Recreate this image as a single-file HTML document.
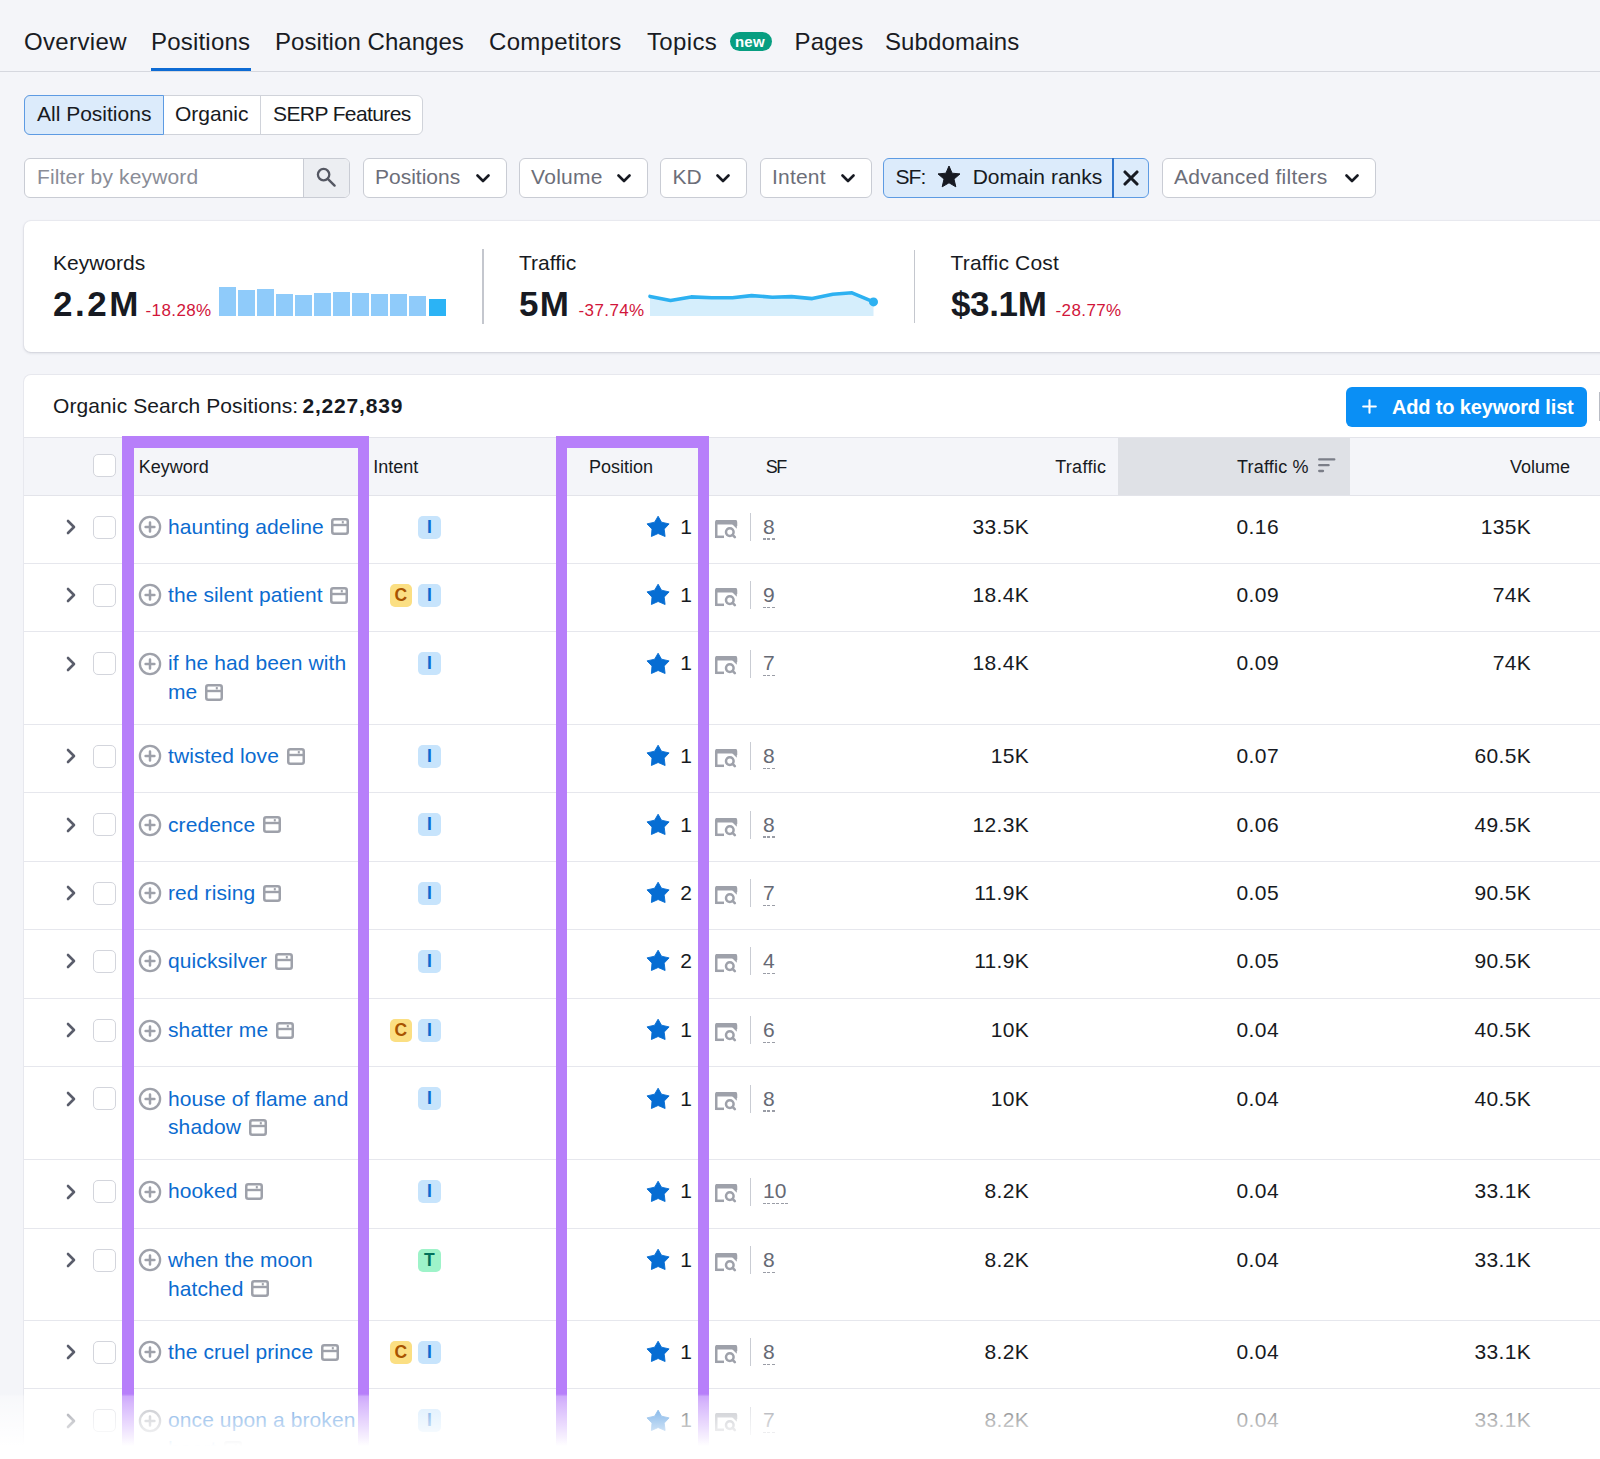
<!DOCTYPE html>
<html><head><meta charset="utf-8"><title>Positions</title>
<style>
html,body{margin:0;padding:0;}
body{width:1600px;height:1459px;overflow:hidden;position:relative;background:#f4f5f9;font-family:"Liberation Sans",sans-serif;}
.t{position:absolute;white-space:nowrap;}
.b{position:absolute;}
.b svg{display:block;}
</style></head><body>
<div class="t " style="left:24px;top:30.08px;font-size:24px;line-height:24px;color:#191b23;font-weight:400;letter-spacing:0.35px;">Overview</div>
<div class="t " style="left:151px;top:30.08px;font-size:24px;line-height:24px;color:#191b23;font-weight:400;letter-spacing:0.2px;">Positions</div>
<div class="t " style="left:275px;top:30.08px;font-size:24px;line-height:24px;color:#191b23;font-weight:400;letter-spacing:0.05px;">Position Changes</div>
<div class="t " style="left:489px;top:30.08px;font-size:24px;line-height:24px;color:#191b23;font-weight:400;letter-spacing:0.3px;">Competitors</div>
<div class="t " style="left:647px;top:30.08px;font-size:24px;line-height:24px;color:#191b23;font-weight:400;letter-spacing:0.35px;">Topics</div>
<div class="t " style="left:794.5px;top:30.08px;font-size:24px;line-height:24px;color:#191b23;font-weight:400;letter-spacing:0.2px;">Pages</div>
<div class="t " style="left:885px;top:30.08px;font-size:24px;line-height:24px;color:#191b23;font-weight:400;letter-spacing:0.1px;">Subdomains</div>
<div class="b" style="left:729.5px;top:32px;width:42px;height:19px;background:#079e81;border-radius:10px;"></div>
<div class="t " style="left:735px;top:33.90px;font-size:15px;line-height:15px;color:#fff;font-weight:700;letter-spacing:0.2px;">new</div>
<div class="b" style="left:0px;top:71px;width:1600px;height:1px;background:#d6d8df;"></div>
<div class="b" style="left:151px;top:68px;width:100px;height:3px;background:#0d6bd4;"></div>
<div class="b" style="left:24px;top:94.5px;width:398.5px;height:40px;background:#fff;border:1px solid #d0d3da;border-radius:6px;box-sizing:border-box;"></div>
<div class="b" style="left:24px;top:94.5px;width:140px;height:40px;background:#dcebfb;border:1px solid #5d9be3;border-radius:6px 0 0 6px;box-sizing:border-box;"></div>
<div class="b" style="left:260.3px;top:95.5px;width:1px;height:38px;background:#d0d3da;"></div>
<div class="t " style="left:37px;top:103.22px;font-size:21px;line-height:21px;color:#171a22;font-weight:400;">All Positions</div>
<div class="t " style="left:175px;top:103.22px;font-size:21px;line-height:21px;color:#171a22;font-weight:400;">Organic</div>
<div class="t " style="left:273px;top:103.22px;font-size:21px;line-height:21px;color:#171a22;font-weight:400;letter-spacing:-0.6px;">SERP Features</div>
<div class="b" style="left:24px;top:158px;width:326px;height:40px;background:#fff;border:1px solid #c9ccd4;border-radius:6px;box-sizing:border-box;overflow:hidden;"><div style="position:absolute;left:278px;top:0;width:48px;height:38px;background:#eceef2;border-left:1px solid #c9ccd4;"></div></div>
<div class="t " style="left:37px;top:166.32px;font-size:21px;line-height:21px;color:#8a8d97;font-weight:400;letter-spacing:0.15px;">Filter by keyword</div>
<div class="b" style="left:315px;top:167px;width:22px;height:22px;"><svg width="22" height="22" viewBox="0 0 22 22"><circle cx="8.6" cy="7.6" r="5.7" fill="none" stroke="#555863" stroke-width="2.3"/><path d="M12.8 11.8 L19.6 18.6" stroke="#555863" stroke-width="2.4" stroke-linecap="round"/></svg></div>
<div class="b" style="left:362.5px;top:158px;width:144.5px;height:40px;background:#fff;border:1px solid #c9ccd4;border-radius:6px;box-sizing:border-box;"></div>
<div class="t " style="left:375.0px;top:166.32px;font-size:21px;line-height:21px;color:#6c6e79;font-weight:400;">Positions</div>
<div class="b" style="left:476.0px;top:174px;width:14px;height:9px;"><svg width="14" height="9" viewBox="0 0 14 9"><path d="M1.5 1.5 L7 7 L12.5 1.5" fill="none" stroke="#171a22" stroke-width="2.6" stroke-linecap="round" stroke-linejoin="round"/></svg></div>
<div class="b" style="left:518.5px;top:158px;width:129px;height:40px;background:#fff;border:1px solid #c9ccd4;border-radius:6px;box-sizing:border-box;"></div>
<div class="t " style="left:531.0px;top:166.32px;font-size:21px;line-height:21px;color:#6c6e79;font-weight:400;letter-spacing:0.3px;">Volume</div>
<div class="b" style="left:616.5px;top:174px;width:14px;height:9px;"><svg width="14" height="9" viewBox="0 0 14 9"><path d="M1.5 1.5 L7 7 L12.5 1.5" fill="none" stroke="#171a22" stroke-width="2.6" stroke-linecap="round" stroke-linejoin="round"/></svg></div>
<div class="b" style="left:660px;top:158px;width:87px;height:40px;background:#fff;border:1px solid #c9ccd4;border-radius:6px;box-sizing:border-box;"></div>
<div class="t " style="left:672.5px;top:166.32px;font-size:21px;line-height:21px;color:#6c6e79;font-weight:400;">KD</div>
<div class="b" style="left:716px;top:174px;width:14px;height:9px;"><svg width="14" height="9" viewBox="0 0 14 9"><path d="M1.5 1.5 L7 7 L12.5 1.5" fill="none" stroke="#171a22" stroke-width="2.6" stroke-linecap="round" stroke-linejoin="round"/></svg></div>
<div class="b" style="left:759.5px;top:158px;width:112px;height:40px;background:#fff;border:1px solid #c9ccd4;border-radius:6px;box-sizing:border-box;"></div>
<div class="t " style="left:772.0px;top:166.32px;font-size:21px;line-height:21px;color:#6c6e79;font-weight:400;letter-spacing:0.2px;">Intent</div>
<div class="b" style="left:840.5px;top:174px;width:14px;height:9px;"><svg width="14" height="9" viewBox="0 0 14 9"><path d="M1.5 1.5 L7 7 L12.5 1.5" fill="none" stroke="#171a22" stroke-width="2.6" stroke-linecap="round" stroke-linejoin="round"/></svg></div>
<div class="b" style="left:883px;top:158px;width:266px;height:40px;background:#dcebfb;border:1px solid #5d9be3;border-radius:6px;box-sizing:border-box;"></div>
<div class="b" style="left:1112px;top:158px;width:2px;height:40px;background:#2f74cc;"></div>
<div class="t " style="left:895.5px;top:166.32px;font-size:21px;line-height:21px;color:#171a22;font-weight:400;letter-spacing:-0.9px;">SF:</div>
<div class="b" style="left:937px;top:165.2px;width:24px;height:23px;"><svg width="24" height="23" viewBox="0 0 24 23"><path d="M12 1 L15.1 8.2 L23 8.9 L17 14.1 L18.8 21.8 L12 17.8 L5.2 21.8 L7 14.1 L1 8.9 L8.9 8.2 Z" fill="#171a22" stroke="#171a22" stroke-width="1" stroke-linejoin="round"/></svg></div>
<div class="t " style="left:972.7px;top:166.32px;font-size:21px;line-height:21px;color:#171a22;font-weight:400;">Domain ranks</div>
<div class="b" style="left:1123px;top:170px;width:16px;height:16px;"><svg width="16" height="16" viewBox="0 0 16 16"><path d="M2 2 L14 14 M14 2 L2 14" stroke="#171a22" stroke-width="3.1" stroke-linecap="round"/></svg></div>
<div class="b" style="left:1161.5px;top:158px;width:214px;height:40px;background:#fff;border:1px solid #c9ccd4;border-radius:6px;box-sizing:border-box;"></div>
<div class="t " style="left:1174.0px;top:166.32px;font-size:21px;line-height:21px;color:#6c6e79;font-weight:400;letter-spacing:0.25px;">Advanced filters</div>
<div class="b" style="left:1344.5px;top:174px;width:14px;height:9px;"><svg width="14" height="9" viewBox="0 0 14 9"><path d="M1.5 1.5 L7 7 L12.5 1.5" fill="none" stroke="#171a22" stroke-width="2.6" stroke-linecap="round" stroke-linejoin="round"/></svg></div>
<div class="b" style="left:24px;top:221px;width:1600px;height:131px;background:#fff;border-radius:7px;box-shadow:0 1px 3px rgba(30,35,60,0.16), 0 0 0 1px rgba(30,35,60,0.03);"></div>
<div class="t " style="left:53px;top:252.22px;font-size:21px;line-height:21px;color:#171a22;font-weight:400;">Keywords</div>
<div class="t " style="left:53px;top:286.37px;font-size:35px;line-height:35px;color:#171a22;font-weight:700;letter-spacing:2.5px;">2.2M</div>
<div class="t " style="left:145.5px;top:301.61px;font-size:17px;line-height:17px;color:#d1153a;font-weight:400;letter-spacing:0.4px;">-18.28%</div>
<div class="b" style="left:218.75px;top:287.4px;width:17px;height:28.6px;background:#8fcbfa;"></div>
<div class="b" style="left:237.82px;top:289.7px;width:17px;height:26.3px;background:#8fcbfa;"></div>
<div class="b" style="left:256.89px;top:289.3px;width:17px;height:26.7px;background:#8fcbfa;"></div>
<div class="b" style="left:275.96px;top:294.2px;width:17px;height:21.8px;background:#8fcbfa;"></div>
<div class="b" style="left:295.03px;top:294.75px;width:17px;height:21.25px;background:#8fcbfa;"></div>
<div class="b" style="left:314.1px;top:293.1px;width:17px;height:22.9px;background:#8fcbfa;"></div>
<div class="b" style="left:333.17px;top:291.9px;width:17px;height:24.1px;background:#8fcbfa;"></div>
<div class="b" style="left:352.24px;top:293.4px;width:17px;height:22.6px;background:#8fcbfa;"></div>
<div class="b" style="left:371.31px;top:294px;width:17px;height:22px;background:#8fcbfa;"></div>
<div class="b" style="left:390.38px;top:294px;width:17px;height:22px;background:#8fcbfa;"></div>
<div class="b" style="left:409.45px;top:295.5px;width:17px;height:20.5px;background:#8fcbfa;"></div>
<div class="b" style="left:428.52px;top:299.4px;width:17px;height:16.6px;background:#2bb3f5;"></div>
<div class="b" style="left:481.8px;top:249px;width:1.8px;height:74.5px;background:#c4c7ce;"></div>
<div class="t " style="left:519px;top:252.22px;font-size:21px;line-height:21px;color:#171a22;font-weight:400;">Traffic</div>
<div class="t " style="left:519px;top:286.37px;font-size:35px;line-height:35px;color:#171a22;font-weight:700;letter-spacing:1.2px;">5M</div>
<div class="t " style="left:578.5px;top:301.61px;font-size:17px;line-height:17px;color:#d1153a;font-weight:400;letter-spacing:0.4px;">-37.74%</div>
<div class="b" style="left:640px;top:280px;width:250px;height:40px;"><svg width="250" height="40" viewBox="0 0 250 40"><path d="M10.0,36 L10.0,16.4 L30.5,20.5 L51.1,16.9 L71.8,17.8 L92.4,17.8 L111.6,15.6 L132.3,17.2 L151.5,16.6 L172.2,18.6 L192.8,14.2 L212.0,12.8 L233.5,21.9 L233.5,36 Z" fill="#d5eefc"/><polyline points="10.0,16.4 30.5,20.5 51.1,16.9 71.8,17.8 92.4,17.8 111.6,15.6 132.3,17.2 151.5,16.6 172.2,18.6 192.8,14.2 212.0,12.8 233.5,21.9" fill="none" stroke="#2db1f1" stroke-width="3.6" stroke-linejoin="round" stroke-linecap="round"/><circle cx="233.5" cy="21.899999999999977" r="4.5" fill="#2db1f1"/></svg></div>
<div class="b" style="left:913.6px;top:249.5px;width:1.8px;height:73.5px;background:#c4c7ce;"></div>
<div class="t " style="left:950.5px;top:252.22px;font-size:21px;line-height:21px;color:#171a22;font-weight:400;letter-spacing:0.2px;">Traffic Cost</div>
<div class="t " style="left:951px;top:286.37px;font-size:35px;line-height:35px;color:#171a22;font-weight:700;letter-spacing:-0.35px;">$3.1M</div>
<div class="t " style="left:1055.5px;top:301.61px;font-size:17px;line-height:17px;color:#d1153a;font-weight:400;letter-spacing:0.4px;">-28.77%</div>
<div class="b" style="left:24px;top:375px;width:1600px;height:1200px;background:#fff;border-radius:7px;box-shadow:0 0 0 1px rgba(30,35,60,0.06);"></div>
<div class="t " style="left:53px;top:394.92px;font-size:21px;line-height:21px;color:#171a22;font-weight:400;letter-spacing:0.1px;">Organic Search Positions:</div>
<div class="t " style="left:302.5px;top:394.92px;font-size:21px;line-height:21px;color:#171a22;font-weight:700;letter-spacing:0.8px;">2,227,839</div>
<div class="b" style="left:1346px;top:386.8px;width:241.3px;height:40px;background:#0a8ff5;border-radius:6px;"></div>
<div class="b" style="left:1362px;top:399px;width:15px;height:15px;"><svg width="15" height="15" viewBox="0 0 15 15"><path d="M7.5 1.2 V13.8 M1.2 7.5 H13.8" stroke="#fff" stroke-width="2.1" stroke-linecap="round"/></svg></div>
<div class="t " style="left:1392px;top:396.57px;font-size:20px;line-height:20px;color:#fff;font-weight:700;letter-spacing:-0.15px;">Add to keyword list</div>
<div class="b" style="left:1599px;top:391.5px;width:1px;height:29.5px;background:#b9bcc4;"></div>
<div class="b" style="left:24px;top:437px;width:1576px;height:59px;background:#f4f5f9;border-top:1px solid #e3e4ea;border-bottom:1px solid #e3e4ea;box-sizing:border-box;"></div>
<div class="b" style="left:1118px;top:437px;width:231.5px;height:59px;background:#dfe1e6;border-top:1px solid #e3e4ea;border-bottom:1px solid #e3e4ea;box-sizing:border-box;"></div>
<div class="t " style="left:138.75px;top:458.06px;font-size:18px;line-height:18px;color:#171a22;font-weight:400;">Keyword</div>
<div class="t " style="left:373.2px;top:458.06px;font-size:18px;line-height:18px;color:#171a22;font-weight:400;">Intent</div>
<div class="t " style="left:589px;top:458.06px;font-size:18px;line-height:18px;color:#171a22;font-weight:400;">Position</div>
<div class="t " style="left:765.7px;top:458.06px;font-size:18px;line-height:18px;color:#171a22;font-weight:400;letter-spacing:-1.5px;">SF</div>
<div class="t " style="right:493.70000000000005px;top:458.06px;font-size:18px;line-height:18px;color:#171a22;font-weight:400;letter-spacing:0.3px;">Traffic</div>
<div class="t " style="left:1237px;top:458.06px;font-size:18px;line-height:18px;color:#171a22;font-weight:400;letter-spacing:0.2px;">Traffic %</div>
<div class="b" style="left:1317.5px;top:457.5px;width:18px;height:15px;"><svg width="18" height="15" viewBox="0 0 18 15"><path d="M1.2 1.4 H16.3 M1.2 7.2 H10.6 M1.2 13 H5" stroke="#7b7e88" stroke-width="2.3" stroke-linecap="round"/></svg></div>
<div class="t " style="right:30px;top:458.06px;font-size:18px;line-height:18px;color:#171a22;font-weight:400;">Volume</div>
<div class="b" style="left:92.5px;top:453.75px;width:23px;height:23px;background:#fff;border:1.8px solid #d3d5dc;border-radius:5px;box-sizing:border-box;"></div>
<div class="b" style="left:24px;top:562.7px;width:1576px;height:1px;background:#e6e7ed;"></div>
<div class="b" style="left:65.5px;top:519.00px;width:10px;height:16px;"><svg width="10" height="16" viewBox="0 0 10 16"><path d="M2 2 L8 8 L2 14" fill="none" stroke="#5a5d6b" stroke-width="2.6" stroke-linecap="round" stroke-linejoin="round"/></svg></div>
<div class="b" style="left:92.8px;top:515.7px;width:23px;height:23px;background:#fff;border:1.8px solid #d3d5dc;border-radius:5px;box-sizing:border-box;"></div>
<div class="b" style="left:137.75px;top:515.10px;width:24px;height:24px;"><svg width="24" height="24" viewBox="0 0 24 24"><circle cx="12" cy="12" r="10.1" fill="none" stroke="#9ea1aa" stroke-width="2.3"/><path d="M12 7.6 V16.4 M7.6 12 H16.4" stroke="#9ea1aa" stroke-width="2.5" stroke-linecap="round"/></svg></div>
<div class="t " style="left:168px;top:515.97px;font-size:21px;line-height:21px;color:#0b6bd0;font-weight:400;letter-spacing:0.1px;">haunting adeline<span style="display:inline-block;width:18px;height:17px;margin-left:7.6px;vertical-align:-1.4px;"><svg width="18" height="17" viewBox="0 0 18 17"><rect x="1.25" y="1.25" width="15.5" height="14.5" rx="2" fill="none" stroke="#9ea1aa" stroke-width="2.5"/><path d="M1.5 7 H16.5" stroke="#9ea1aa" stroke-width="2.4"/><rect x="10.8" y="3.1" width="2" height="2.3" fill="#9ea1aa"/></svg></span></div>
<div class="b" style="left:418.2px;top:515.5px;width:22.5px;height:23px;background:#c7e4fc;border-radius:5px;color:#0b6bd0;font-size:17.5px;line-height:23px;font-weight:700;text-align:center;">I</div>
<div class="b" style="left:646px;top:515.00px;width:24px;height:23px;"><svg width="24" height="23" viewBox="0 0 24 23"><path d="M12.1 1.2 L15.5 7.2 L23.1 8.9 L18.2 14.1 L19.1 21.5 L12.1 18.5 L5.4 21.5 L6 14.1 L1 8.9 L8.6 7.2 Z" fill="#066dd3" stroke="#066dd3" stroke-width="0.9" stroke-linejoin="round"/></svg></div>
<div class="t " style="right:908.2px;top:515.97px;font-size:21px;line-height:21px;color:#171a22;font-weight:400;">1</div>
<div class="b" style="left:714.5px;top:519.80px;width:23px;height:19px;"><svg width="23" height="19" viewBox="0 0 23 19"><path d="M1.25 18 V2.5 Q1.25 0.8 3 0.8 H19.5 Q21 0.8 21 2.5 V6" fill="none" stroke="#9ea1aa" stroke-width="2.5"/><path d="M0.8 2.5 H21.2" stroke="#9ea1aa" stroke-width="4"/><polygon points="17,4 21.8,4 21.8,8.8" fill="#9ea1aa"/><path d="M1.25 16.8 H9" stroke="#9ea1aa" stroke-width="2.5"/><circle cx="14.8" cy="12.1" r="3.8" fill="none" stroke="#9ea1aa" stroke-width="2.5"/><path d="M17.6 14.9 L19.8 17.1" stroke="#9ea1aa" stroke-width="2.6" stroke-linecap="round"/></svg></div>
<div class="b" style="left:749.5px;top:513px;width:1.8px;height:28px;background:#c9ccd3;"></div>
<div class="t " style="left:763px;top:515.97px;font-size:21px;line-height:21px;color:#666974;font-weight:400;">8</div>
<div class="b" style="left:763px;top:538.35px;width:12.2px;height:1.6px;background:repeating-linear-gradient(to right,#9a9da6 0 2.7px,transparent 2.7px 4.5px);"></div>
<div class="t " style="right:571px;top:515.97px;font-size:21px;line-height:21px;color:#171a22;font-weight:400;letter-spacing:0.3px;">33.5K</div>
<div class="t " style="left:1236.5px;top:515.97px;font-size:21px;line-height:21px;color:#171a22;font-weight:400;letter-spacing:0.4px;">0.16</div>
<div class="t " style="right:69px;top:515.97px;font-size:21px;line-height:21px;color:#171a22;font-weight:400;letter-spacing:0.3px;">135K</div>
<div class="b" style="left:24px;top:631.0px;width:1576px;height:1px;background:#e6e7ed;"></div>
<div class="b" style="left:65.5px;top:587.20px;width:10px;height:16px;"><svg width="10" height="16" viewBox="0 0 10 16"><path d="M2 2 L8 8 L2 14" fill="none" stroke="#5a5d6b" stroke-width="2.6" stroke-linecap="round" stroke-linejoin="round"/></svg></div>
<div class="b" style="left:92.8px;top:583.9px;width:23px;height:23px;background:#fff;border:1.8px solid #d3d5dc;border-radius:5px;box-sizing:border-box;"></div>
<div class="b" style="left:137.75px;top:583.30px;width:24px;height:24px;"><svg width="24" height="24" viewBox="0 0 24 24"><circle cx="12" cy="12" r="10.1" fill="none" stroke="#9ea1aa" stroke-width="2.3"/><path d="M12 7.6 V16.4 M7.6 12 H16.4" stroke="#9ea1aa" stroke-width="2.5" stroke-linecap="round"/></svg></div>
<div class="t " style="left:168px;top:584.17px;font-size:21px;line-height:21px;color:#0b6bd0;font-weight:400;letter-spacing:0.1px;">the silent patient<span style="display:inline-block;width:18px;height:17px;margin-left:7.6px;vertical-align:-1.4px;"><svg width="18" height="17" viewBox="0 0 18 17"><rect x="1.25" y="1.25" width="15.5" height="14.5" rx="2" fill="none" stroke="#9ea1aa" stroke-width="2.5"/><path d="M1.5 7 H16.5" stroke="#9ea1aa" stroke-width="2.4"/><rect x="10.8" y="3.1" width="2" height="2.3" fill="#9ea1aa"/></svg></span></div>
<div class="b" style="left:389.7px;top:583.7px;width:22.5px;height:23px;background:#fbdf83;border-radius:5px;color:#a85300;font-size:17.5px;line-height:23px;font-weight:700;text-align:center;">C</div>
<div class="b" style="left:418.2px;top:583.7px;width:22.5px;height:23px;background:#c7e4fc;border-radius:5px;color:#0b6bd0;font-size:17.5px;line-height:23px;font-weight:700;text-align:center;">I</div>
<div class="b" style="left:646px;top:583.20px;width:24px;height:23px;"><svg width="24" height="23" viewBox="0 0 24 23"><path d="M12.1 1.2 L15.5 7.2 L23.1 8.9 L18.2 14.1 L19.1 21.5 L12.1 18.5 L5.4 21.5 L6 14.1 L1 8.9 L8.6 7.2 Z" fill="#066dd3" stroke="#066dd3" stroke-width="0.9" stroke-linejoin="round"/></svg></div>
<div class="t " style="right:908.2px;top:584.17px;font-size:21px;line-height:21px;color:#171a22;font-weight:400;">1</div>
<div class="b" style="left:714.5px;top:588.00px;width:23px;height:19px;"><svg width="23" height="19" viewBox="0 0 23 19"><path d="M1.25 18 V2.5 Q1.25 0.8 3 0.8 H19.5 Q21 0.8 21 2.5 V6" fill="none" stroke="#9ea1aa" stroke-width="2.5"/><path d="M0.8 2.5 H21.2" stroke="#9ea1aa" stroke-width="4"/><polygon points="17,4 21.8,4 21.8,8.8" fill="#9ea1aa"/><path d="M1.25 16.8 H9" stroke="#9ea1aa" stroke-width="2.5"/><circle cx="14.8" cy="12.1" r="3.8" fill="none" stroke="#9ea1aa" stroke-width="2.5"/><path d="M17.6 14.9 L19.8 17.1" stroke="#9ea1aa" stroke-width="2.6" stroke-linecap="round"/></svg></div>
<div class="b" style="left:749.5px;top:581.2px;width:1.8px;height:28px;background:#c9ccd3;"></div>
<div class="t " style="left:763px;top:584.17px;font-size:21px;line-height:21px;color:#666974;font-weight:400;">9</div>
<div class="b" style="left:763px;top:606.55px;width:12.2px;height:1.6px;background:repeating-linear-gradient(to right,#9a9da6 0 2.7px,transparent 2.7px 4.5px);"></div>
<div class="t " style="right:571px;top:584.17px;font-size:21px;line-height:21px;color:#171a22;font-weight:400;letter-spacing:0.3px;">18.4K</div>
<div class="t " style="left:1236.5px;top:584.17px;font-size:21px;line-height:21px;color:#171a22;font-weight:400;letter-spacing:0.4px;">0.09</div>
<div class="t " style="right:69px;top:584.17px;font-size:21px;line-height:21px;color:#171a22;font-weight:400;letter-spacing:0.3px;">74K</div>
<div class="b" style="left:24px;top:723.7px;width:1576px;height:1px;background:#e6e7ed;"></div>
<div class="b" style="left:65.5px;top:655.50px;width:10px;height:16px;"><svg width="10" height="16" viewBox="0 0 10 16"><path d="M2 2 L8 8 L2 14" fill="none" stroke="#5a5d6b" stroke-width="2.6" stroke-linecap="round" stroke-linejoin="round"/></svg></div>
<div class="b" style="left:92.8px;top:652.2px;width:23px;height:23px;background:#fff;border:1.8px solid #d3d5dc;border-radius:5px;box-sizing:border-box;"></div>
<div class="b" style="left:137.75px;top:651.60px;width:24px;height:24px;"><svg width="24" height="24" viewBox="0 0 24 24"><circle cx="12" cy="12" r="10.1" fill="none" stroke="#9ea1aa" stroke-width="2.3"/><path d="M12 7.6 V16.4 M7.6 12 H16.4" stroke="#9ea1aa" stroke-width="2.5" stroke-linecap="round"/></svg></div>
<div class="t " style="left:168px;top:652.47px;font-size:21px;line-height:21px;color:#0b6bd0;font-weight:400;letter-spacing:0.1px;">if he had been with</div>
<div class="t " style="left:168px;top:681.27px;font-size:21px;line-height:21px;color:#0b6bd0;font-weight:400;letter-spacing:0.1px;">me<span style="display:inline-block;width:18px;height:17px;margin-left:7.6px;vertical-align:-1.4px;"><svg width="18" height="17" viewBox="0 0 18 17"><rect x="1.25" y="1.25" width="15.5" height="14.5" rx="2" fill="none" stroke="#9ea1aa" stroke-width="2.5"/><path d="M1.5 7 H16.5" stroke="#9ea1aa" stroke-width="2.4"/><rect x="10.8" y="3.1" width="2" height="2.3" fill="#9ea1aa"/></svg></span></div>
<div class="b" style="left:418.2px;top:652.0px;width:22.5px;height:23px;background:#c7e4fc;border-radius:5px;color:#0b6bd0;font-size:17.5px;line-height:23px;font-weight:700;text-align:center;">I</div>
<div class="b" style="left:646px;top:651.50px;width:24px;height:23px;"><svg width="24" height="23" viewBox="0 0 24 23"><path d="M12.1 1.2 L15.5 7.2 L23.1 8.9 L18.2 14.1 L19.1 21.5 L12.1 18.5 L5.4 21.5 L6 14.1 L1 8.9 L8.6 7.2 Z" fill="#066dd3" stroke="#066dd3" stroke-width="0.9" stroke-linejoin="round"/></svg></div>
<div class="t " style="right:908.2px;top:652.47px;font-size:21px;line-height:21px;color:#171a22;font-weight:400;">1</div>
<div class="b" style="left:714.5px;top:656.30px;width:23px;height:19px;"><svg width="23" height="19" viewBox="0 0 23 19"><path d="M1.25 18 V2.5 Q1.25 0.8 3 0.8 H19.5 Q21 0.8 21 2.5 V6" fill="none" stroke="#9ea1aa" stroke-width="2.5"/><path d="M0.8 2.5 H21.2" stroke="#9ea1aa" stroke-width="4"/><polygon points="17,4 21.8,4 21.8,8.8" fill="#9ea1aa"/><path d="M1.25 16.8 H9" stroke="#9ea1aa" stroke-width="2.5"/><circle cx="14.8" cy="12.1" r="3.8" fill="none" stroke="#9ea1aa" stroke-width="2.5"/><path d="M17.6 14.9 L19.8 17.1" stroke="#9ea1aa" stroke-width="2.6" stroke-linecap="round"/></svg></div>
<div class="b" style="left:749.5px;top:649.5px;width:1.8px;height:28px;background:#c9ccd3;"></div>
<div class="t " style="left:763px;top:652.47px;font-size:21px;line-height:21px;color:#666974;font-weight:400;">7</div>
<div class="b" style="left:763px;top:674.85px;width:12.2px;height:1.6px;background:repeating-linear-gradient(to right,#9a9da6 0 2.7px,transparent 2.7px 4.5px);"></div>
<div class="t " style="right:571px;top:652.47px;font-size:21px;line-height:21px;color:#171a22;font-weight:400;letter-spacing:0.3px;">18.4K</div>
<div class="t " style="left:1236.5px;top:652.47px;font-size:21px;line-height:21px;color:#171a22;font-weight:400;letter-spacing:0.4px;">0.09</div>
<div class="t " style="right:69px;top:652.47px;font-size:21px;line-height:21px;color:#171a22;font-weight:400;letter-spacing:0.3px;">74K</div>
<div class="b" style="left:24px;top:792.2px;width:1576px;height:1px;background:#e6e7ed;"></div>
<div class="b" style="left:65.5px;top:748.20px;width:10px;height:16px;"><svg width="10" height="16" viewBox="0 0 10 16"><path d="M2 2 L8 8 L2 14" fill="none" stroke="#5a5d6b" stroke-width="2.6" stroke-linecap="round" stroke-linejoin="round"/></svg></div>
<div class="b" style="left:92.8px;top:744.9px;width:23px;height:23px;background:#fff;border:1.8px solid #d3d5dc;border-radius:5px;box-sizing:border-box;"></div>
<div class="b" style="left:137.75px;top:744.30px;width:24px;height:24px;"><svg width="24" height="24" viewBox="0 0 24 24"><circle cx="12" cy="12" r="10.1" fill="none" stroke="#9ea1aa" stroke-width="2.3"/><path d="M12 7.6 V16.4 M7.6 12 H16.4" stroke="#9ea1aa" stroke-width="2.5" stroke-linecap="round"/></svg></div>
<div class="t " style="left:168px;top:745.17px;font-size:21px;line-height:21px;color:#0b6bd0;font-weight:400;letter-spacing:0.1px;">twisted love<span style="display:inline-block;width:18px;height:17px;margin-left:7.6px;vertical-align:-1.4px;"><svg width="18" height="17" viewBox="0 0 18 17"><rect x="1.25" y="1.25" width="15.5" height="14.5" rx="2" fill="none" stroke="#9ea1aa" stroke-width="2.5"/><path d="M1.5 7 H16.5" stroke="#9ea1aa" stroke-width="2.4"/><rect x="10.8" y="3.1" width="2" height="2.3" fill="#9ea1aa"/></svg></span></div>
<div class="b" style="left:418.2px;top:744.7px;width:22.5px;height:23px;background:#c7e4fc;border-radius:5px;color:#0b6bd0;font-size:17.5px;line-height:23px;font-weight:700;text-align:center;">I</div>
<div class="b" style="left:646px;top:744.20px;width:24px;height:23px;"><svg width="24" height="23" viewBox="0 0 24 23"><path d="M12.1 1.2 L15.5 7.2 L23.1 8.9 L18.2 14.1 L19.1 21.5 L12.1 18.5 L5.4 21.5 L6 14.1 L1 8.9 L8.6 7.2 Z" fill="#066dd3" stroke="#066dd3" stroke-width="0.9" stroke-linejoin="round"/></svg></div>
<div class="t " style="right:908.2px;top:745.17px;font-size:21px;line-height:21px;color:#171a22;font-weight:400;">1</div>
<div class="b" style="left:714.5px;top:749.00px;width:23px;height:19px;"><svg width="23" height="19" viewBox="0 0 23 19"><path d="M1.25 18 V2.5 Q1.25 0.8 3 0.8 H19.5 Q21 0.8 21 2.5 V6" fill="none" stroke="#9ea1aa" stroke-width="2.5"/><path d="M0.8 2.5 H21.2" stroke="#9ea1aa" stroke-width="4"/><polygon points="17,4 21.8,4 21.8,8.8" fill="#9ea1aa"/><path d="M1.25 16.8 H9" stroke="#9ea1aa" stroke-width="2.5"/><circle cx="14.8" cy="12.1" r="3.8" fill="none" stroke="#9ea1aa" stroke-width="2.5"/><path d="M17.6 14.9 L19.8 17.1" stroke="#9ea1aa" stroke-width="2.6" stroke-linecap="round"/></svg></div>
<div class="b" style="left:749.5px;top:742.2px;width:1.8px;height:28px;background:#c9ccd3;"></div>
<div class="t " style="left:763px;top:745.17px;font-size:21px;line-height:21px;color:#666974;font-weight:400;">8</div>
<div class="b" style="left:763px;top:767.55px;width:12.2px;height:1.6px;background:repeating-linear-gradient(to right,#9a9da6 0 2.7px,transparent 2.7px 4.5px);"></div>
<div class="t " style="right:571px;top:745.17px;font-size:21px;line-height:21px;color:#171a22;font-weight:400;letter-spacing:0.3px;">15K</div>
<div class="t " style="left:1236.5px;top:745.17px;font-size:21px;line-height:21px;color:#171a22;font-weight:400;letter-spacing:0.4px;">0.07</div>
<div class="t " style="right:69px;top:745.17px;font-size:21px;line-height:21px;color:#171a22;font-weight:400;letter-spacing:0.3px;">60.5K</div>
<div class="b" style="left:24px;top:860.8px;width:1576px;height:1px;background:#e6e7ed;"></div>
<div class="b" style="left:65.5px;top:816.70px;width:10px;height:16px;"><svg width="10" height="16" viewBox="0 0 10 16"><path d="M2 2 L8 8 L2 14" fill="none" stroke="#5a5d6b" stroke-width="2.6" stroke-linecap="round" stroke-linejoin="round"/></svg></div>
<div class="b" style="left:92.8px;top:813.4px;width:23px;height:23px;background:#fff;border:1.8px solid #d3d5dc;border-radius:5px;box-sizing:border-box;"></div>
<div class="b" style="left:137.75px;top:812.80px;width:24px;height:24px;"><svg width="24" height="24" viewBox="0 0 24 24"><circle cx="12" cy="12" r="10.1" fill="none" stroke="#9ea1aa" stroke-width="2.3"/><path d="M12 7.6 V16.4 M7.6 12 H16.4" stroke="#9ea1aa" stroke-width="2.5" stroke-linecap="round"/></svg></div>
<div class="t " style="left:168px;top:813.67px;font-size:21px;line-height:21px;color:#0b6bd0;font-weight:400;letter-spacing:0.1px;">credence<span style="display:inline-block;width:18px;height:17px;margin-left:7.6px;vertical-align:-1.4px;"><svg width="18" height="17" viewBox="0 0 18 17"><rect x="1.25" y="1.25" width="15.5" height="14.5" rx="2" fill="none" stroke="#9ea1aa" stroke-width="2.5"/><path d="M1.5 7 H16.5" stroke="#9ea1aa" stroke-width="2.4"/><rect x="10.8" y="3.1" width="2" height="2.3" fill="#9ea1aa"/></svg></span></div>
<div class="b" style="left:418.2px;top:813.2px;width:22.5px;height:23px;background:#c7e4fc;border-radius:5px;color:#0b6bd0;font-size:17.5px;line-height:23px;font-weight:700;text-align:center;">I</div>
<div class="b" style="left:646px;top:812.70px;width:24px;height:23px;"><svg width="24" height="23" viewBox="0 0 24 23"><path d="M12.1 1.2 L15.5 7.2 L23.1 8.9 L18.2 14.1 L19.1 21.5 L12.1 18.5 L5.4 21.5 L6 14.1 L1 8.9 L8.6 7.2 Z" fill="#066dd3" stroke="#066dd3" stroke-width="0.9" stroke-linejoin="round"/></svg></div>
<div class="t " style="right:908.2px;top:813.67px;font-size:21px;line-height:21px;color:#171a22;font-weight:400;">1</div>
<div class="b" style="left:714.5px;top:817.50px;width:23px;height:19px;"><svg width="23" height="19" viewBox="0 0 23 19"><path d="M1.25 18 V2.5 Q1.25 0.8 3 0.8 H19.5 Q21 0.8 21 2.5 V6" fill="none" stroke="#9ea1aa" stroke-width="2.5"/><path d="M0.8 2.5 H21.2" stroke="#9ea1aa" stroke-width="4"/><polygon points="17,4 21.8,4 21.8,8.8" fill="#9ea1aa"/><path d="M1.25 16.8 H9" stroke="#9ea1aa" stroke-width="2.5"/><circle cx="14.8" cy="12.1" r="3.8" fill="none" stroke="#9ea1aa" stroke-width="2.5"/><path d="M17.6 14.9 L19.8 17.1" stroke="#9ea1aa" stroke-width="2.6" stroke-linecap="round"/></svg></div>
<div class="b" style="left:749.5px;top:810.7px;width:1.8px;height:28px;background:#c9ccd3;"></div>
<div class="t " style="left:763px;top:813.67px;font-size:21px;line-height:21px;color:#666974;font-weight:400;">8</div>
<div class="b" style="left:763px;top:836.05px;width:12.2px;height:1.6px;background:repeating-linear-gradient(to right,#9a9da6 0 2.7px,transparent 2.7px 4.5px);"></div>
<div class="t " style="right:571px;top:813.67px;font-size:21px;line-height:21px;color:#171a22;font-weight:400;letter-spacing:0.3px;">12.3K</div>
<div class="t " style="left:1236.5px;top:813.67px;font-size:21px;line-height:21px;color:#171a22;font-weight:400;letter-spacing:0.4px;">0.06</div>
<div class="t " style="right:69px;top:813.67px;font-size:21px;line-height:21px;color:#171a22;font-weight:400;letter-spacing:0.3px;">49.5K</div>
<div class="b" style="left:24px;top:928.8px;width:1576px;height:1px;background:#e6e7ed;"></div>
<div class="b" style="left:65.5px;top:885.30px;width:10px;height:16px;"><svg width="10" height="16" viewBox="0 0 10 16"><path d="M2 2 L8 8 L2 14" fill="none" stroke="#5a5d6b" stroke-width="2.6" stroke-linecap="round" stroke-linejoin="round"/></svg></div>
<div class="b" style="left:92.8px;top:882.0px;width:23px;height:23px;background:#fff;border:1.8px solid #d3d5dc;border-radius:5px;box-sizing:border-box;"></div>
<div class="b" style="left:137.75px;top:881.40px;width:24px;height:24px;"><svg width="24" height="24" viewBox="0 0 24 24"><circle cx="12" cy="12" r="10.1" fill="none" stroke="#9ea1aa" stroke-width="2.3"/><path d="M12 7.6 V16.4 M7.6 12 H16.4" stroke="#9ea1aa" stroke-width="2.5" stroke-linecap="round"/></svg></div>
<div class="t " style="left:168px;top:882.27px;font-size:21px;line-height:21px;color:#0b6bd0;font-weight:400;letter-spacing:0.1px;">red rising<span style="display:inline-block;width:18px;height:17px;margin-left:7.6px;vertical-align:-1.4px;"><svg width="18" height="17" viewBox="0 0 18 17"><rect x="1.25" y="1.25" width="15.5" height="14.5" rx="2" fill="none" stroke="#9ea1aa" stroke-width="2.5"/><path d="M1.5 7 H16.5" stroke="#9ea1aa" stroke-width="2.4"/><rect x="10.8" y="3.1" width="2" height="2.3" fill="#9ea1aa"/></svg></span></div>
<div class="b" style="left:418.2px;top:881.8px;width:22.5px;height:23px;background:#c7e4fc;border-radius:5px;color:#0b6bd0;font-size:17.5px;line-height:23px;font-weight:700;text-align:center;">I</div>
<div class="b" style="left:646px;top:881.30px;width:24px;height:23px;"><svg width="24" height="23" viewBox="0 0 24 23"><path d="M12.1 1.2 L15.5 7.2 L23.1 8.9 L18.2 14.1 L19.1 21.5 L12.1 18.5 L5.4 21.5 L6 14.1 L1 8.9 L8.6 7.2 Z" fill="#066dd3" stroke="#066dd3" stroke-width="0.9" stroke-linejoin="round"/></svg></div>
<div class="t " style="right:908.2px;top:882.27px;font-size:21px;line-height:21px;color:#171a22;font-weight:400;">2</div>
<div class="b" style="left:714.5px;top:886.10px;width:23px;height:19px;"><svg width="23" height="19" viewBox="0 0 23 19"><path d="M1.25 18 V2.5 Q1.25 0.8 3 0.8 H19.5 Q21 0.8 21 2.5 V6" fill="none" stroke="#9ea1aa" stroke-width="2.5"/><path d="M0.8 2.5 H21.2" stroke="#9ea1aa" stroke-width="4"/><polygon points="17,4 21.8,4 21.8,8.8" fill="#9ea1aa"/><path d="M1.25 16.8 H9" stroke="#9ea1aa" stroke-width="2.5"/><circle cx="14.8" cy="12.1" r="3.8" fill="none" stroke="#9ea1aa" stroke-width="2.5"/><path d="M17.6 14.9 L19.8 17.1" stroke="#9ea1aa" stroke-width="2.6" stroke-linecap="round"/></svg></div>
<div class="b" style="left:749.5px;top:879.3px;width:1.8px;height:28px;background:#c9ccd3;"></div>
<div class="t " style="left:763px;top:882.27px;font-size:21px;line-height:21px;color:#666974;font-weight:400;">7</div>
<div class="b" style="left:763px;top:904.65px;width:12.2px;height:1.6px;background:repeating-linear-gradient(to right,#9a9da6 0 2.7px,transparent 2.7px 4.5px);"></div>
<div class="t " style="right:571px;top:882.27px;font-size:21px;line-height:21px;color:#171a22;font-weight:400;letter-spacing:0.3px;">11.9K</div>
<div class="t " style="left:1236.5px;top:882.27px;font-size:21px;line-height:21px;color:#171a22;font-weight:400;letter-spacing:0.4px;">0.05</div>
<div class="t " style="right:69px;top:882.27px;font-size:21px;line-height:21px;color:#171a22;font-weight:400;letter-spacing:0.3px;">90.5K</div>
<div class="b" style="left:24px;top:997.9px;width:1576px;height:1px;background:#e6e7ed;"></div>
<div class="b" style="left:65.5px;top:953.30px;width:10px;height:16px;"><svg width="10" height="16" viewBox="0 0 10 16"><path d="M2 2 L8 8 L2 14" fill="none" stroke="#5a5d6b" stroke-width="2.6" stroke-linecap="round" stroke-linejoin="round"/></svg></div>
<div class="b" style="left:92.8px;top:950.0px;width:23px;height:23px;background:#fff;border:1.8px solid #d3d5dc;border-radius:5px;box-sizing:border-box;"></div>
<div class="b" style="left:137.75px;top:949.40px;width:24px;height:24px;"><svg width="24" height="24" viewBox="0 0 24 24"><circle cx="12" cy="12" r="10.1" fill="none" stroke="#9ea1aa" stroke-width="2.3"/><path d="M12 7.6 V16.4 M7.6 12 H16.4" stroke="#9ea1aa" stroke-width="2.5" stroke-linecap="round"/></svg></div>
<div class="t " style="left:168px;top:950.27px;font-size:21px;line-height:21px;color:#0b6bd0;font-weight:400;letter-spacing:0.1px;">quicksilver<span style="display:inline-block;width:18px;height:17px;margin-left:7.6px;vertical-align:-1.4px;"><svg width="18" height="17" viewBox="0 0 18 17"><rect x="1.25" y="1.25" width="15.5" height="14.5" rx="2" fill="none" stroke="#9ea1aa" stroke-width="2.5"/><path d="M1.5 7 H16.5" stroke="#9ea1aa" stroke-width="2.4"/><rect x="10.8" y="3.1" width="2" height="2.3" fill="#9ea1aa"/></svg></span></div>
<div class="b" style="left:418.2px;top:949.8px;width:22.5px;height:23px;background:#c7e4fc;border-radius:5px;color:#0b6bd0;font-size:17.5px;line-height:23px;font-weight:700;text-align:center;">I</div>
<div class="b" style="left:646px;top:949.30px;width:24px;height:23px;"><svg width="24" height="23" viewBox="0 0 24 23"><path d="M12.1 1.2 L15.5 7.2 L23.1 8.9 L18.2 14.1 L19.1 21.5 L12.1 18.5 L5.4 21.5 L6 14.1 L1 8.9 L8.6 7.2 Z" fill="#066dd3" stroke="#066dd3" stroke-width="0.9" stroke-linejoin="round"/></svg></div>
<div class="t " style="right:908.2px;top:950.27px;font-size:21px;line-height:21px;color:#171a22;font-weight:400;">2</div>
<div class="b" style="left:714.5px;top:954.10px;width:23px;height:19px;"><svg width="23" height="19" viewBox="0 0 23 19"><path d="M1.25 18 V2.5 Q1.25 0.8 3 0.8 H19.5 Q21 0.8 21 2.5 V6" fill="none" stroke="#9ea1aa" stroke-width="2.5"/><path d="M0.8 2.5 H21.2" stroke="#9ea1aa" stroke-width="4"/><polygon points="17,4 21.8,4 21.8,8.8" fill="#9ea1aa"/><path d="M1.25 16.8 H9" stroke="#9ea1aa" stroke-width="2.5"/><circle cx="14.8" cy="12.1" r="3.8" fill="none" stroke="#9ea1aa" stroke-width="2.5"/><path d="M17.6 14.9 L19.8 17.1" stroke="#9ea1aa" stroke-width="2.6" stroke-linecap="round"/></svg></div>
<div class="b" style="left:749.5px;top:947.3px;width:1.8px;height:28px;background:#c9ccd3;"></div>
<div class="t " style="left:763px;top:950.27px;font-size:21px;line-height:21px;color:#666974;font-weight:400;">4</div>
<div class="b" style="left:763px;top:972.65px;width:12.2px;height:1.6px;background:repeating-linear-gradient(to right,#9a9da6 0 2.7px,transparent 2.7px 4.5px);"></div>
<div class="t " style="right:571px;top:950.27px;font-size:21px;line-height:21px;color:#171a22;font-weight:400;letter-spacing:0.3px;">11.9K</div>
<div class="t " style="left:1236.5px;top:950.27px;font-size:21px;line-height:21px;color:#171a22;font-weight:400;letter-spacing:0.4px;">0.05</div>
<div class="t " style="right:69px;top:950.27px;font-size:21px;line-height:21px;color:#171a22;font-weight:400;letter-spacing:0.3px;">90.5K</div>
<div class="b" style="left:24px;top:1066.2px;width:1576px;height:1px;background:#e6e7ed;"></div>
<div class="b" style="left:65.5px;top:1022.40px;width:10px;height:16px;"><svg width="10" height="16" viewBox="0 0 10 16"><path d="M2 2 L8 8 L2 14" fill="none" stroke="#5a5d6b" stroke-width="2.6" stroke-linecap="round" stroke-linejoin="round"/></svg></div>
<div class="b" style="left:92.8px;top:1019.1px;width:23px;height:23px;background:#fff;border:1.8px solid #d3d5dc;border-radius:5px;box-sizing:border-box;"></div>
<div class="b" style="left:137.75px;top:1018.50px;width:24px;height:24px;"><svg width="24" height="24" viewBox="0 0 24 24"><circle cx="12" cy="12" r="10.1" fill="none" stroke="#9ea1aa" stroke-width="2.3"/><path d="M12 7.6 V16.4 M7.6 12 H16.4" stroke="#9ea1aa" stroke-width="2.5" stroke-linecap="round"/></svg></div>
<div class="t " style="left:168px;top:1019.37px;font-size:21px;line-height:21px;color:#0b6bd0;font-weight:400;letter-spacing:0.1px;">shatter me<span style="display:inline-block;width:18px;height:17px;margin-left:7.6px;vertical-align:-1.4px;"><svg width="18" height="17" viewBox="0 0 18 17"><rect x="1.25" y="1.25" width="15.5" height="14.5" rx="2" fill="none" stroke="#9ea1aa" stroke-width="2.5"/><path d="M1.5 7 H16.5" stroke="#9ea1aa" stroke-width="2.4"/><rect x="10.8" y="3.1" width="2" height="2.3" fill="#9ea1aa"/></svg></span></div>
<div class="b" style="left:389.7px;top:1018.9px;width:22.5px;height:23px;background:#fbdf83;border-radius:5px;color:#a85300;font-size:17.5px;line-height:23px;font-weight:700;text-align:center;">C</div>
<div class="b" style="left:418.2px;top:1018.9px;width:22.5px;height:23px;background:#c7e4fc;border-radius:5px;color:#0b6bd0;font-size:17.5px;line-height:23px;font-weight:700;text-align:center;">I</div>
<div class="b" style="left:646px;top:1018.40px;width:24px;height:23px;"><svg width="24" height="23" viewBox="0 0 24 23"><path d="M12.1 1.2 L15.5 7.2 L23.1 8.9 L18.2 14.1 L19.1 21.5 L12.1 18.5 L5.4 21.5 L6 14.1 L1 8.9 L8.6 7.2 Z" fill="#066dd3" stroke="#066dd3" stroke-width="0.9" stroke-linejoin="round"/></svg></div>
<div class="t " style="right:908.2px;top:1019.37px;font-size:21px;line-height:21px;color:#171a22;font-weight:400;">1</div>
<div class="b" style="left:714.5px;top:1023.20px;width:23px;height:19px;"><svg width="23" height="19" viewBox="0 0 23 19"><path d="M1.25 18 V2.5 Q1.25 0.8 3 0.8 H19.5 Q21 0.8 21 2.5 V6" fill="none" stroke="#9ea1aa" stroke-width="2.5"/><path d="M0.8 2.5 H21.2" stroke="#9ea1aa" stroke-width="4"/><polygon points="17,4 21.8,4 21.8,8.8" fill="#9ea1aa"/><path d="M1.25 16.8 H9" stroke="#9ea1aa" stroke-width="2.5"/><circle cx="14.8" cy="12.1" r="3.8" fill="none" stroke="#9ea1aa" stroke-width="2.5"/><path d="M17.6 14.9 L19.8 17.1" stroke="#9ea1aa" stroke-width="2.6" stroke-linecap="round"/></svg></div>
<div class="b" style="left:749.5px;top:1016.4px;width:1.8px;height:28px;background:#c9ccd3;"></div>
<div class="t " style="left:763px;top:1019.37px;font-size:21px;line-height:21px;color:#666974;font-weight:400;">6</div>
<div class="b" style="left:763px;top:1041.75px;width:12.2px;height:1.6px;background:repeating-linear-gradient(to right,#9a9da6 0 2.7px,transparent 2.7px 4.5px);"></div>
<div class="t " style="right:571px;top:1019.37px;font-size:21px;line-height:21px;color:#171a22;font-weight:400;letter-spacing:0.3px;">10K</div>
<div class="t " style="left:1236.5px;top:1019.37px;font-size:21px;line-height:21px;color:#171a22;font-weight:400;letter-spacing:0.4px;">0.04</div>
<div class="t " style="right:69px;top:1019.37px;font-size:21px;line-height:21px;color:#171a22;font-weight:400;letter-spacing:0.3px;">40.5K</div>
<div class="b" style="left:24px;top:1159.0px;width:1576px;height:1px;background:#e6e7ed;"></div>
<div class="b" style="left:65.5px;top:1090.70px;width:10px;height:16px;"><svg width="10" height="16" viewBox="0 0 10 16"><path d="M2 2 L8 8 L2 14" fill="none" stroke="#5a5d6b" stroke-width="2.6" stroke-linecap="round" stroke-linejoin="round"/></svg></div>
<div class="b" style="left:92.8px;top:1087.4px;width:23px;height:23px;background:#fff;border:1.8px solid #d3d5dc;border-radius:5px;box-sizing:border-box;"></div>
<div class="b" style="left:137.75px;top:1086.80px;width:24px;height:24px;"><svg width="24" height="24" viewBox="0 0 24 24"><circle cx="12" cy="12" r="10.1" fill="none" stroke="#9ea1aa" stroke-width="2.3"/><path d="M12 7.6 V16.4 M7.6 12 H16.4" stroke="#9ea1aa" stroke-width="2.5" stroke-linecap="round"/></svg></div>
<div class="t " style="left:168px;top:1087.67px;font-size:21px;line-height:21px;color:#0b6bd0;font-weight:400;letter-spacing:0.1px;">house of flame and</div>
<div class="t " style="left:168px;top:1116.47px;font-size:21px;line-height:21px;color:#0b6bd0;font-weight:400;letter-spacing:0.1px;">shadow<span style="display:inline-block;width:18px;height:17px;margin-left:7.6px;vertical-align:-1.4px;"><svg width="18" height="17" viewBox="0 0 18 17"><rect x="1.25" y="1.25" width="15.5" height="14.5" rx="2" fill="none" stroke="#9ea1aa" stroke-width="2.5"/><path d="M1.5 7 H16.5" stroke="#9ea1aa" stroke-width="2.4"/><rect x="10.8" y="3.1" width="2" height="2.3" fill="#9ea1aa"/></svg></span></div>
<div class="b" style="left:418.2px;top:1087.2px;width:22.5px;height:23px;background:#c7e4fc;border-radius:5px;color:#0b6bd0;font-size:17.5px;line-height:23px;font-weight:700;text-align:center;">I</div>
<div class="b" style="left:646px;top:1086.70px;width:24px;height:23px;"><svg width="24" height="23" viewBox="0 0 24 23"><path d="M12.1 1.2 L15.5 7.2 L23.1 8.9 L18.2 14.1 L19.1 21.5 L12.1 18.5 L5.4 21.5 L6 14.1 L1 8.9 L8.6 7.2 Z" fill="#066dd3" stroke="#066dd3" stroke-width="0.9" stroke-linejoin="round"/></svg></div>
<div class="t " style="right:908.2px;top:1087.67px;font-size:21px;line-height:21px;color:#171a22;font-weight:400;">1</div>
<div class="b" style="left:714.5px;top:1091.50px;width:23px;height:19px;"><svg width="23" height="19" viewBox="0 0 23 19"><path d="M1.25 18 V2.5 Q1.25 0.8 3 0.8 H19.5 Q21 0.8 21 2.5 V6" fill="none" stroke="#9ea1aa" stroke-width="2.5"/><path d="M0.8 2.5 H21.2" stroke="#9ea1aa" stroke-width="4"/><polygon points="17,4 21.8,4 21.8,8.8" fill="#9ea1aa"/><path d="M1.25 16.8 H9" stroke="#9ea1aa" stroke-width="2.5"/><circle cx="14.8" cy="12.1" r="3.8" fill="none" stroke="#9ea1aa" stroke-width="2.5"/><path d="M17.6 14.9 L19.8 17.1" stroke="#9ea1aa" stroke-width="2.6" stroke-linecap="round"/></svg></div>
<div class="b" style="left:749.5px;top:1084.7px;width:1.8px;height:28px;background:#c9ccd3;"></div>
<div class="t " style="left:763px;top:1087.67px;font-size:21px;line-height:21px;color:#666974;font-weight:400;">8</div>
<div class="b" style="left:763px;top:1110.05px;width:12.2px;height:1.6px;background:repeating-linear-gradient(to right,#9a9da6 0 2.7px,transparent 2.7px 4.5px);"></div>
<div class="t " style="right:571px;top:1087.67px;font-size:21px;line-height:21px;color:#171a22;font-weight:400;letter-spacing:0.3px;">10K</div>
<div class="t " style="left:1236.5px;top:1087.67px;font-size:21px;line-height:21px;color:#171a22;font-weight:400;letter-spacing:0.4px;">0.04</div>
<div class="t " style="right:69px;top:1087.67px;font-size:21px;line-height:21px;color:#171a22;font-weight:400;letter-spacing:0.3px;">40.5K</div>
<div class="b" style="left:24px;top:1227.8px;width:1576px;height:1px;background:#e6e7ed;"></div>
<div class="b" style="left:65.5px;top:1183.50px;width:10px;height:16px;"><svg width="10" height="16" viewBox="0 0 10 16"><path d="M2 2 L8 8 L2 14" fill="none" stroke="#5a5d6b" stroke-width="2.6" stroke-linecap="round" stroke-linejoin="round"/></svg></div>
<div class="b" style="left:92.8px;top:1180.2px;width:23px;height:23px;background:#fff;border:1.8px solid #d3d5dc;border-radius:5px;box-sizing:border-box;"></div>
<div class="b" style="left:137.75px;top:1179.60px;width:24px;height:24px;"><svg width="24" height="24" viewBox="0 0 24 24"><circle cx="12" cy="12" r="10.1" fill="none" stroke="#9ea1aa" stroke-width="2.3"/><path d="M12 7.6 V16.4 M7.6 12 H16.4" stroke="#9ea1aa" stroke-width="2.5" stroke-linecap="round"/></svg></div>
<div class="t " style="left:168px;top:1180.47px;font-size:21px;line-height:21px;color:#0b6bd0;font-weight:400;letter-spacing:0.1px;">hooked<span style="display:inline-block;width:18px;height:17px;margin-left:7.6px;vertical-align:-1.4px;"><svg width="18" height="17" viewBox="0 0 18 17"><rect x="1.25" y="1.25" width="15.5" height="14.5" rx="2" fill="none" stroke="#9ea1aa" stroke-width="2.5"/><path d="M1.5 7 H16.5" stroke="#9ea1aa" stroke-width="2.4"/><rect x="10.8" y="3.1" width="2" height="2.3" fill="#9ea1aa"/></svg></span></div>
<div class="b" style="left:418.2px;top:1180.0px;width:22.5px;height:23px;background:#c7e4fc;border-radius:5px;color:#0b6bd0;font-size:17.5px;line-height:23px;font-weight:700;text-align:center;">I</div>
<div class="b" style="left:646px;top:1179.50px;width:24px;height:23px;"><svg width="24" height="23" viewBox="0 0 24 23"><path d="M12.1 1.2 L15.5 7.2 L23.1 8.9 L18.2 14.1 L19.1 21.5 L12.1 18.5 L5.4 21.5 L6 14.1 L1 8.9 L8.6 7.2 Z" fill="#066dd3" stroke="#066dd3" stroke-width="0.9" stroke-linejoin="round"/></svg></div>
<div class="t " style="right:908.2px;top:1180.47px;font-size:21px;line-height:21px;color:#171a22;font-weight:400;">1</div>
<div class="b" style="left:714.5px;top:1184.30px;width:23px;height:19px;"><svg width="23" height="19" viewBox="0 0 23 19"><path d="M1.25 18 V2.5 Q1.25 0.8 3 0.8 H19.5 Q21 0.8 21 2.5 V6" fill="none" stroke="#9ea1aa" stroke-width="2.5"/><path d="M0.8 2.5 H21.2" stroke="#9ea1aa" stroke-width="4"/><polygon points="17,4 21.8,4 21.8,8.8" fill="#9ea1aa"/><path d="M1.25 16.8 H9" stroke="#9ea1aa" stroke-width="2.5"/><circle cx="14.8" cy="12.1" r="3.8" fill="none" stroke="#9ea1aa" stroke-width="2.5"/><path d="M17.6 14.9 L19.8 17.1" stroke="#9ea1aa" stroke-width="2.6" stroke-linecap="round"/></svg></div>
<div class="b" style="left:749.5px;top:1177.5px;width:1.8px;height:28px;background:#c9ccd3;"></div>
<div class="t " style="left:763px;top:1180.47px;font-size:21px;line-height:21px;color:#666974;font-weight:400;">10</div>
<div class="b" style="left:763px;top:1202.85px;width:25.7px;height:1.6px;background:repeating-linear-gradient(to right,#9a9da6 0 2.7px,transparent 2.7px 4.5px);"></div>
<div class="t " style="right:571px;top:1180.47px;font-size:21px;line-height:21px;color:#171a22;font-weight:400;letter-spacing:0.3px;">8.2K</div>
<div class="t " style="left:1236.5px;top:1180.47px;font-size:21px;line-height:21px;color:#171a22;font-weight:400;letter-spacing:0.4px;">0.04</div>
<div class="t " style="right:69px;top:1180.47px;font-size:21px;line-height:21px;color:#171a22;font-weight:400;letter-spacing:0.3px;">33.1K</div>
<div class="b" style="left:24px;top:1319.7px;width:1576px;height:1px;background:#e6e7ed;"></div>
<div class="b" style="left:65.5px;top:1252.30px;width:10px;height:16px;"><svg width="10" height="16" viewBox="0 0 10 16"><path d="M2 2 L8 8 L2 14" fill="none" stroke="#5a5d6b" stroke-width="2.6" stroke-linecap="round" stroke-linejoin="round"/></svg></div>
<div class="b" style="left:92.8px;top:1249.0px;width:23px;height:23px;background:#fff;border:1.8px solid #d3d5dc;border-radius:5px;box-sizing:border-box;"></div>
<div class="b" style="left:137.75px;top:1248.40px;width:24px;height:24px;"><svg width="24" height="24" viewBox="0 0 24 24"><circle cx="12" cy="12" r="10.1" fill="none" stroke="#9ea1aa" stroke-width="2.3"/><path d="M12 7.6 V16.4 M7.6 12 H16.4" stroke="#9ea1aa" stroke-width="2.5" stroke-linecap="round"/></svg></div>
<div class="t " style="left:168px;top:1249.27px;font-size:21px;line-height:21px;color:#0b6bd0;font-weight:400;letter-spacing:0.1px;">when the moon</div>
<div class="t " style="left:168px;top:1278.07px;font-size:21px;line-height:21px;color:#0b6bd0;font-weight:400;letter-spacing:0.1px;">hatched<span style="display:inline-block;width:18px;height:17px;margin-left:7.6px;vertical-align:-1.4px;"><svg width="18" height="17" viewBox="0 0 18 17"><rect x="1.25" y="1.25" width="15.5" height="14.5" rx="2" fill="none" stroke="#9ea1aa" stroke-width="2.5"/><path d="M1.5 7 H16.5" stroke="#9ea1aa" stroke-width="2.4"/><rect x="10.8" y="3.1" width="2" height="2.3" fill="#9ea1aa"/></svg></span></div>
<div class="b" style="left:418.2px;top:1248.8px;width:22.5px;height:23px;background:#9ef3c9;border-radius:5px;color:#00705a;font-size:17.5px;line-height:23px;font-weight:700;text-align:center;">T</div>
<div class="b" style="left:646px;top:1248.30px;width:24px;height:23px;"><svg width="24" height="23" viewBox="0 0 24 23"><path d="M12.1 1.2 L15.5 7.2 L23.1 8.9 L18.2 14.1 L19.1 21.5 L12.1 18.5 L5.4 21.5 L6 14.1 L1 8.9 L8.6 7.2 Z" fill="#066dd3" stroke="#066dd3" stroke-width="0.9" stroke-linejoin="round"/></svg></div>
<div class="t " style="right:908.2px;top:1249.27px;font-size:21px;line-height:21px;color:#171a22;font-weight:400;">1</div>
<div class="b" style="left:714.5px;top:1253.10px;width:23px;height:19px;"><svg width="23" height="19" viewBox="0 0 23 19"><path d="M1.25 18 V2.5 Q1.25 0.8 3 0.8 H19.5 Q21 0.8 21 2.5 V6" fill="none" stroke="#9ea1aa" stroke-width="2.5"/><path d="M0.8 2.5 H21.2" stroke="#9ea1aa" stroke-width="4"/><polygon points="17,4 21.8,4 21.8,8.8" fill="#9ea1aa"/><path d="M1.25 16.8 H9" stroke="#9ea1aa" stroke-width="2.5"/><circle cx="14.8" cy="12.1" r="3.8" fill="none" stroke="#9ea1aa" stroke-width="2.5"/><path d="M17.6 14.9 L19.8 17.1" stroke="#9ea1aa" stroke-width="2.6" stroke-linecap="round"/></svg></div>
<div class="b" style="left:749.5px;top:1246.3px;width:1.8px;height:28px;background:#c9ccd3;"></div>
<div class="t " style="left:763px;top:1249.27px;font-size:21px;line-height:21px;color:#666974;font-weight:400;">8</div>
<div class="b" style="left:763px;top:1271.65px;width:12.2px;height:1.6px;background:repeating-linear-gradient(to right,#9a9da6 0 2.7px,transparent 2.7px 4.5px);"></div>
<div class="t " style="right:571px;top:1249.27px;font-size:21px;line-height:21px;color:#171a22;font-weight:400;letter-spacing:0.3px;">8.2K</div>
<div class="t " style="left:1236.5px;top:1249.27px;font-size:21px;line-height:21px;color:#171a22;font-weight:400;letter-spacing:0.4px;">0.04</div>
<div class="t " style="right:69px;top:1249.27px;font-size:21px;line-height:21px;color:#171a22;font-weight:400;letter-spacing:0.3px;">33.1K</div>
<div class="b" style="left:24px;top:1388.0px;width:1576px;height:1px;background:#e6e7ed;"></div>
<div class="b" style="left:65.5px;top:1344.20px;width:10px;height:16px;"><svg width="10" height="16" viewBox="0 0 10 16"><path d="M2 2 L8 8 L2 14" fill="none" stroke="#5a5d6b" stroke-width="2.6" stroke-linecap="round" stroke-linejoin="round"/></svg></div>
<div class="b" style="left:92.8px;top:1340.9px;width:23px;height:23px;background:#fff;border:1.8px solid #d3d5dc;border-radius:5px;box-sizing:border-box;"></div>
<div class="b" style="left:137.75px;top:1340.30px;width:24px;height:24px;"><svg width="24" height="24" viewBox="0 0 24 24"><circle cx="12" cy="12" r="10.1" fill="none" stroke="#9ea1aa" stroke-width="2.3"/><path d="M12 7.6 V16.4 M7.6 12 H16.4" stroke="#9ea1aa" stroke-width="2.5" stroke-linecap="round"/></svg></div>
<div class="t " style="left:168px;top:1341.17px;font-size:21px;line-height:21px;color:#0b6bd0;font-weight:400;letter-spacing:0.1px;">the cruel prince<span style="display:inline-block;width:18px;height:17px;margin-left:7.6px;vertical-align:-1.4px;"><svg width="18" height="17" viewBox="0 0 18 17"><rect x="1.25" y="1.25" width="15.5" height="14.5" rx="2" fill="none" stroke="#9ea1aa" stroke-width="2.5"/><path d="M1.5 7 H16.5" stroke="#9ea1aa" stroke-width="2.4"/><rect x="10.8" y="3.1" width="2" height="2.3" fill="#9ea1aa"/></svg></span></div>
<div class="b" style="left:389.7px;top:1340.7px;width:22.5px;height:23px;background:#fbdf83;border-radius:5px;color:#a85300;font-size:17.5px;line-height:23px;font-weight:700;text-align:center;">C</div>
<div class="b" style="left:418.2px;top:1340.7px;width:22.5px;height:23px;background:#c7e4fc;border-radius:5px;color:#0b6bd0;font-size:17.5px;line-height:23px;font-weight:700;text-align:center;">I</div>
<div class="b" style="left:646px;top:1340.20px;width:24px;height:23px;"><svg width="24" height="23" viewBox="0 0 24 23"><path d="M12.1 1.2 L15.5 7.2 L23.1 8.9 L18.2 14.1 L19.1 21.5 L12.1 18.5 L5.4 21.5 L6 14.1 L1 8.9 L8.6 7.2 Z" fill="#066dd3" stroke="#066dd3" stroke-width="0.9" stroke-linejoin="round"/></svg></div>
<div class="t " style="right:908.2px;top:1341.17px;font-size:21px;line-height:21px;color:#171a22;font-weight:400;">1</div>
<div class="b" style="left:714.5px;top:1345.00px;width:23px;height:19px;"><svg width="23" height="19" viewBox="0 0 23 19"><path d="M1.25 18 V2.5 Q1.25 0.8 3 0.8 H19.5 Q21 0.8 21 2.5 V6" fill="none" stroke="#9ea1aa" stroke-width="2.5"/><path d="M0.8 2.5 H21.2" stroke="#9ea1aa" stroke-width="4"/><polygon points="17,4 21.8,4 21.8,8.8" fill="#9ea1aa"/><path d="M1.25 16.8 H9" stroke="#9ea1aa" stroke-width="2.5"/><circle cx="14.8" cy="12.1" r="3.8" fill="none" stroke="#9ea1aa" stroke-width="2.5"/><path d="M17.6 14.9 L19.8 17.1" stroke="#9ea1aa" stroke-width="2.6" stroke-linecap="round"/></svg></div>
<div class="b" style="left:749.5px;top:1338.2px;width:1.8px;height:28px;background:#c9ccd3;"></div>
<div class="t " style="left:763px;top:1341.17px;font-size:21px;line-height:21px;color:#666974;font-weight:400;">8</div>
<div class="b" style="left:763px;top:1363.55px;width:12.2px;height:1.6px;background:repeating-linear-gradient(to right,#9a9da6 0 2.7px,transparent 2.7px 4.5px);"></div>
<div class="t " style="right:571px;top:1341.17px;font-size:21px;line-height:21px;color:#171a22;font-weight:400;letter-spacing:0.3px;">8.2K</div>
<div class="t " style="left:1236.5px;top:1341.17px;font-size:21px;line-height:21px;color:#171a22;font-weight:400;letter-spacing:0.4px;">0.04</div>
<div class="t " style="right:69px;top:1341.17px;font-size:21px;line-height:21px;color:#171a22;font-weight:400;letter-spacing:0.3px;">33.1K</div>
<div class="b" style="left:24px;top:1479.5px;width:1576px;height:1px;background:#e6e7ed;"></div>
<div class="b" style="left:65.5px;top:1412.50px;width:10px;height:16px;"><svg width="10" height="16" viewBox="0 0 10 16"><path d="M2 2 L8 8 L2 14" fill="none" stroke="#5a5d6b" stroke-width="2.6" stroke-linecap="round" stroke-linejoin="round"/></svg></div>
<div class="b" style="left:92.8px;top:1409.2px;width:23px;height:23px;background:#fff;border:1.8px solid #d3d5dc;border-radius:5px;box-sizing:border-box;"></div>
<div class="b" style="left:137.75px;top:1408.60px;width:24px;height:24px;"><svg width="24" height="24" viewBox="0 0 24 24"><circle cx="12" cy="12" r="10.1" fill="none" stroke="#9ea1aa" stroke-width="2.3"/><path d="M12 7.6 V16.4 M7.6 12 H16.4" stroke="#9ea1aa" stroke-width="2.5" stroke-linecap="round"/></svg></div>
<div class="t " style="left:168px;top:1409.47px;font-size:21px;line-height:21px;color:#0b6bd0;font-weight:400;letter-spacing:0.1px;">once upon a broken</div>
<div class="t " style="left:168px;top:1438.27px;font-size:21px;line-height:21px;color:#0b6bd0;font-weight:400;letter-spacing:0.1px;">heart<span style="display:inline-block;width:18px;height:17px;margin-left:7.6px;vertical-align:-1.4px;"><svg width="18" height="17" viewBox="0 0 18 17"><rect x="1.25" y="1.25" width="15.5" height="14.5" rx="2" fill="none" stroke="#9ea1aa" stroke-width="2.5"/><path d="M1.5 7 H16.5" stroke="#9ea1aa" stroke-width="2.4"/><rect x="10.8" y="3.1" width="2" height="2.3" fill="#9ea1aa"/></svg></span></div>
<div class="b" style="left:418.2px;top:1409.0px;width:22.5px;height:23px;background:#c7e4fc;border-radius:5px;color:#0b6bd0;font-size:17.5px;line-height:23px;font-weight:700;text-align:center;">I</div>
<div class="b" style="left:646px;top:1408.50px;width:24px;height:23px;"><svg width="24" height="23" viewBox="0 0 24 23"><path d="M12.1 1.2 L15.5 7.2 L23.1 8.9 L18.2 14.1 L19.1 21.5 L12.1 18.5 L5.4 21.5 L6 14.1 L1 8.9 L8.6 7.2 Z" fill="#066dd3" stroke="#066dd3" stroke-width="0.9" stroke-linejoin="round"/></svg></div>
<div class="t " style="right:908.2px;top:1409.47px;font-size:21px;line-height:21px;color:#171a22;font-weight:400;">1</div>
<div class="b" style="left:714.5px;top:1413.30px;width:23px;height:19px;"><svg width="23" height="19" viewBox="0 0 23 19"><path d="M1.25 18 V2.5 Q1.25 0.8 3 0.8 H19.5 Q21 0.8 21 2.5 V6" fill="none" stroke="#9ea1aa" stroke-width="2.5"/><path d="M0.8 2.5 H21.2" stroke="#9ea1aa" stroke-width="4"/><polygon points="17,4 21.8,4 21.8,8.8" fill="#9ea1aa"/><path d="M1.25 16.8 H9" stroke="#9ea1aa" stroke-width="2.5"/><circle cx="14.8" cy="12.1" r="3.8" fill="none" stroke="#9ea1aa" stroke-width="2.5"/><path d="M17.6 14.9 L19.8 17.1" stroke="#9ea1aa" stroke-width="2.6" stroke-linecap="round"/></svg></div>
<div class="b" style="left:749.5px;top:1406.5px;width:1.8px;height:28px;background:#c9ccd3;"></div>
<div class="t " style="left:763px;top:1409.47px;font-size:21px;line-height:21px;color:#666974;font-weight:400;">7</div>
<div class="b" style="left:763px;top:1431.85px;width:12.2px;height:1.6px;background:repeating-linear-gradient(to right,#9a9da6 0 2.7px,transparent 2.7px 4.5px);"></div>
<div class="t " style="right:571px;top:1409.47px;font-size:21px;line-height:21px;color:#171a22;font-weight:400;letter-spacing:0.3px;">8.2K</div>
<div class="t " style="left:1236.5px;top:1409.47px;font-size:21px;line-height:21px;color:#171a22;font-weight:400;letter-spacing:0.4px;">0.04</div>
<div class="t " style="right:69px;top:1409.47px;font-size:21px;line-height:21px;color:#171a22;font-weight:400;letter-spacing:0.3px;">33.1K</div>
<div class="b" style="left:122px;top:436.3px;width:247px;height:1100px;border:11px solid #b77ffa;border-top-width:12px;border-left-width:12px;box-sizing:border-box;"></div>
<div class="b" style="left:556px;top:436.3px;width:153px;height:1100px;border:11px solid #b77ffa;border-top-width:12px;box-sizing:border-box;"></div>
<div class="b" style="left:0;top:1392px;width:1600px;height:67px;background:linear-gradient(to bottom, rgba(255,255,255,0) 2px, rgba(255,255,255,0.33) 4.5px, rgba(255,255,255,0.45) 12px, rgba(255,255,255,0.66) 28px, rgba(255,255,255,0.88) 45px, #fff 54px);"></div>
</body></html>
